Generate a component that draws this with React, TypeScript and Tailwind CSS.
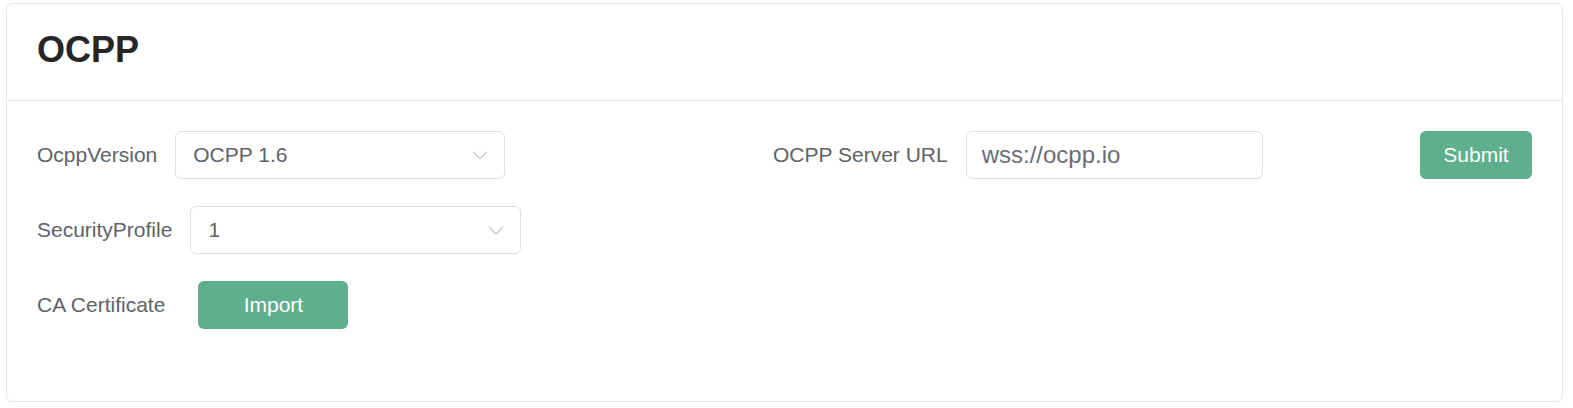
import { useState } from "react";

const Chevron = () => (
  <svg width="16" height="9" viewBox="0 0 16 9" fill="none" className="shrink-0">
    <polyline points="1,1 8,8 15,1" stroke="#c0c4cc" strokeWidth="1.2" fill="none" />
  </svg>
);

type SelectBoxProps = {
  value: string;
  width: string;
};

const SelectBox = ({ value, width }: SelectBoxProps) => (
  <div
    className={`flex h-[48px] items-center justify-between rounded-[6px] border border-[#dcdfe6] bg-white pl-[17px] pr-[16px] ${width}`}
  >
    <span className="text-[21px] text-[#606266]">{value}</span>
    <Chevron />
  </div>
);

const GreenButton = ({ children, className }: { children: string; className?: string }) => (
  <button
    className={`h-[48px] rounded-[6px] bg-[#5daf8e] text-[21px] text-white ${className ?? ""}`}
  >
    {children}
  </button>
);

export default function App() {
  const [url, setUrl] = useState("wss://ocpp.io");

  return (
    <div className="bg-white pl-[6px] pt-[3px] font-['Liberation_Sans',Arial,sans-serif]">
      <div className="h-[399px] w-[1557px] rounded-[6px] border border-[#e4e7ed] bg-white">
        <div className="h-[97px] border-b border-[#e4e7ed] px-[30px] pt-[28px]">
          <h1 className="text-[36px] font-bold leading-[36px] text-[#262626]">OCPP</h1>
        </div>
        <div className="flex flex-col gap-[27px] px-[30px] pt-[30px]">
          <div className="flex items-center">
            <div className="flex w-[736px] items-center">
              <label className="mr-[18px] text-[21px] leading-[48px] text-[#606266]">OcppVersion</label>
              <SelectBox value="OCPP 1.6" width="w-[330px]" />
            </div>
            <label className="mr-[18px] text-[21px] leading-[48px] text-[#606266]">OCPP Server URL</label>
            <input
              value={url}
              onChange={(e) => setUrl(e.target.value)}
              className="h-[48px] w-[297px] rounded-[6px] border border-[#dcdfe6] px-[15px] text-[24px] text-[#6b6d72] outline-none"
            />
            <GreenButton className="ml-auto w-[112px]">Submit</GreenButton>
          </div>
          <div className="flex items-center">
            <label className="mr-[18px] text-[21px] leading-[48px] text-[#606266]">SecurityProfile</label>
            <SelectBox value="1" width="w-[331px]" />
          </div>
          <div className="flex items-center">
            <label className="mr-[33px] text-[21px] leading-[48px] text-[#606266]">CA Certificate</label>
            <GreenButton className="w-[150px]">Import</GreenButton>
          </div>
        </div>
      </div>
    </div>
  );
}
